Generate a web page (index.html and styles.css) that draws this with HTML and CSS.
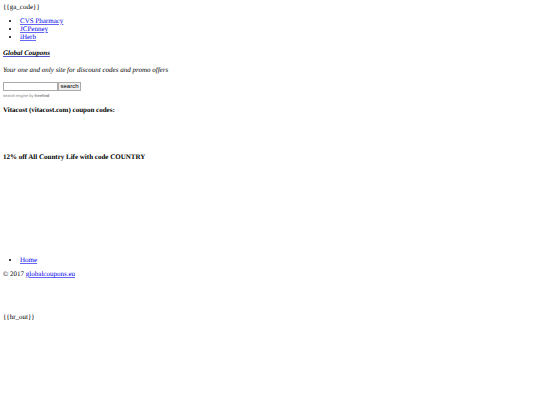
FILE: index.html
```
<!DOCTYPE html>
<html lang="en">
<head>
    <meta charset="UTF-8">
    <title>Global Coupons</title>
    <link rel="stylesheet" href="styles.css">
</head>
<body>
    <div>{{ga_code}}</div>

    <ul class="menu">
        <li><a href="#">CVS Pharmacy</a></li>
        <li><a href="#">JCPenney</a></li>
        <li><a href="#">iHerb</a></li>
    </ul>

    <h1><a href="#">Global Coupons</a></h1>
    <p class="slogan">Your one and only site for discount codes and promo offers</p>

    <form class="search">
        <input type="text" name="query" aria-label="Search"><button type="submit">search</button>
    </form>
    <div class="credit"><a href="#">search engine</a> by <a href="#"><b>freefind</b></a></div>

    <div class="coupons">
        <h2>Vitacost (vitacost.com) coupon codes:</h2>
        <h2>12% off All Country Life with code COUNTRY</h2>
    </div>

    <div class="footer">
        <ul class="menu">
            <li><a href="#">Home</a></li>
        </ul>
        <p>© 2017 <a href="#">globalcoupons.eu</a></p>
    </div>

    <div>{{hr_out}}</div>
</body>
</html>
```

FILE: styles.css
```
body {
    margin: 3px;
    font-family: "Liberation Serif", "Times New Roman", serif;
    font-size: 7px;
    line-height: 8px;
    text-rendering: geometricPrecision;
    color: #000;
}

a {
    color: #0000ee;
    text-decoration-color: #6666f4;
}

.menu {
    margin: 6px 0;
    padding-left: 17px;
}

h1 {
    margin: 8px 0 9px;
    font-size: 7px;
    font-style: italic;
}

h1 a {
    color: #000;
    text-decoration-color: #5555cc;
}

.slogan {
    margin: 9px 0 8px;
    font-style: italic;
}

.search {
    display: flex;
}

.search input {
    box-sizing: border-box;
    width: 55px;
    height: 9px;
    padding: 0 1px;
    border: 1px solid #aaa;
    font-size: 6px;
}

.search button {
    box-sizing: border-box;
    width: 23px;
    height: 9px;
    padding: 0;
    border: 1px solid #aaa;
    background: #efefef;
    font-family: "Liberation Sans", Arial, sans-serif;
    font-size: 6px;
    line-height: 7px;
}

.credit {
    margin-top: 1px;
    font-family: "Liberation Sans", Arial, sans-serif;
    font-size: 4px;
    color: #808080;
}

.credit a {
    color: #808080;
    text-decoration: none;
}

.coupons h2 {
    margin: 6px 0 39px;
    font-size: 7px;
}

.footer {
    margin: 95px 0 35px;
}

.footer p {
    margin: 6px 0;
}
```
